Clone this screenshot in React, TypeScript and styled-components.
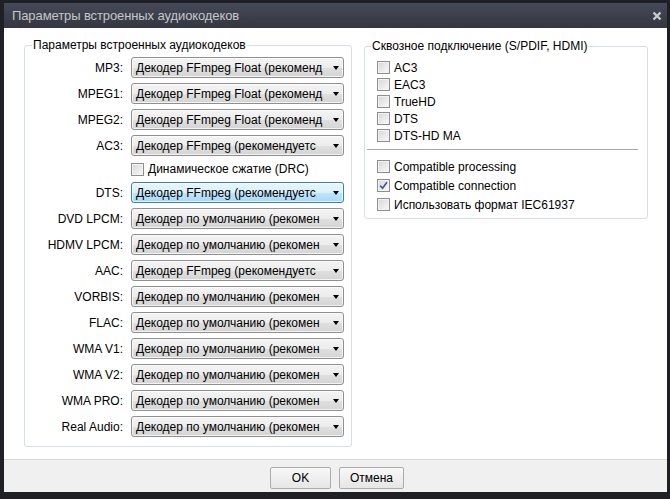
import React from 'react';
import styled, { createGlobalStyle } from 'styled-components';

const GlobalStyle = createGlobalStyle`
  html, body {
    margin: 0;
    padding: 0;
    background: #1d1e23;
  }
  body {
    font-family: "Liberation Sans", Arial, sans-serif;
    font-size: 12px;
    color: #000;
  }
`;

interface Codec {
  label: string;
  value: string;
  focused?: boolean;
  drcAfter?: boolean;
}

// only the part that fits in the combobox is shown
const FF_FLOAT = 'Декодер FFmpeg Float (рекоменд';
const FF = 'Декодер FFmpeg (рекомендуетс';
const DEF = 'Декодер по умолчанию (рекомен';

const codecs: Codec[] = [
  { label: 'MP3:', value: FF_FLOAT },
  { label: 'MPEG1:', value: FF_FLOAT },
  { label: 'MPEG2:', value: FF_FLOAT },
  { label: 'AC3:', value: FF, drcAfter: true },
  { label: 'DTS:', value: FF, focused: true },
  { label: 'DVD LPCM:', value: DEF },
  { label: 'HDMV LPCM:', value: DEF },
  { label: 'AAC:', value: FF },
  { label: 'VORBIS:', value: DEF },
  { label: 'FLAC:', value: DEF },
  { label: 'WMA V1:', value: DEF },
  { label: 'WMA V2:', value: DEF },
  { label: 'WMA PRO:', value: DEF },
  { label: 'Real Audio:', value: DEF },
];

const passthrough = ['AC3', 'EAC3', 'TrueHD', 'DTS', 'DTS-HD MA'];

const extra = [
  { label: 'Compatible processing', checked: false },
  { label: 'Compatible connection', checked: true },
  { label: 'Использовать формат IEC61937', checked: false },
];

const CheckBox = ({ checked }: { checked?: boolean }) => (
  <Box>
    {checked && (
      <svg width="9" height="9" viewBox="0 0 9 9">
        <path d="M1.2 4.6 L3.6 7.2 L7.9 1.3" fill="none" stroke="#3f5491" strokeWidth="1.6" />
      </svg>
    )}
  </Box>
);

const Check = ({ label, checked, h }: { label: string; checked?: boolean; h: number }) => (
  <CheckRow $h={h}>
    <CheckBox checked={checked} />
    <span>{label}</span>
  </CheckRow>
);

const App = () => {
  return (
    <>
      <GlobalStyle />
      <Window>
        <TitleBar>
          <TitleText>Параметры встроенных аудиокодеков</TitleText>
          <svg width="10" height="10" viewBox="0 0 10 10">
            <path d="M1.5 1.5 L8.5 8.5 M8.5 1.5 L1.5 8.5" stroke="#c9cbcf" strokeWidth="2.4" />
          </svg>
        </TitleBar>
        <Body>
          <Group $width={328}>
            <Legend $offset={7}>Параметры встроенных аудиокодеков</Legend>
            <CodecGrid>
              {codecs.map((c) => (
                <React.Fragment key={c.label}>
                  <Label>{c.label}</Label>
                  <Select $focused={c.focused}>
                    <SelectText>{c.value}</SelectText>
                    <Arrow />
                  </Select>
                  {c.drcAfter && (
                    <DrcCell>
                      <Check label="Динамическое сжатие (DRC)" h={16} />
                    </DrcCell>
                  )}
                </React.Fragment>
              ))}
            </CodecGrid>
          </Group>
          <Group $width={284} $top={1}>
            <Legend $offset={6}>Сквозное подключение (S/PDIF, HDMI)</Legend>
            <CheckList $top={6}>
              {passthrough.map((p) => (
                <Check key={p} label={p} h={17} />
              ))}
            </CheckList>
            <Separator />
            <CheckList $top={7} $bottom={4}>
              {extra.map((e) => (
                <Check key={e.label} label={e.label} checked={e.checked} h={19} />
              ))}
            </CheckList>
          </Group>
        </Body>
        <Footer>
          <Button $width={61}>OK</Button>
          <Button $width={65}>Отмена</Button>
        </Footer>
      </Window>
    </>
  );
};

const Window = styled.div`
  width: 670px;
  height: 499px;
  box-sizing: border-box;
  display: flex;
  flex-direction: column;
  background: #1f2026;
  padding: 3px 3px 7px 4px;
`;

const TitleBar = styled.div`
  height: 25px;
  flex-shrink: 0;
  display: flex;
  align-items: center;
  justify-content: space-between;
  padding: 0 5px 0 8px;
  background: linear-gradient(#464958, #343640);
`;

const TitleText = styled.span`
  color: #c4c6cb;
  font-size: 13px;
  letter-spacing: -0.1px;
`;

const Body = styled.div`
  flex: 1;
  background: #fff;
  display: flex;
  align-items: flex-start;
  gap: 12px;
  padding: 10px 0 0 20px;
`;

const Group = styled.fieldset<{ $width: number; $top?: number }>`
  width: ${(p) => p.$width}px;
  box-sizing: border-box;
  min-width: 0;
  margin: ${(p) => p.$top ?? 0}px 0 0 0;
  padding: 0;
  border: 1px solid #d5dfe5;
  border-radius: 3px;
`;

const Legend = styled.legend<{ $offset: number }>`
  margin-left: ${(p) => p.$offset}px;
  padding: 0 1px;
  line-height: 14px;
`;

const CodecGrid = styled.div`
  display: grid;
  grid-template-columns: 98px 213px;
  column-gap: 8px;
  row-gap: 5px;
  align-items: center;
  padding: 5px 7px 9px 0;
`;

const Label = styled.div`
  text-align: right;
  white-space: nowrap;
`;

const DrcCell = styled.div`
  grid-column: 2;
`;

const Select = styled.div<{ $focused?: boolean }>`
  height: 21px;
  box-sizing: border-box;
  display: flex;
  align-items: center;
  padding: 0 3px 0 4px;
  border: 1px solid ${(p) => (p.$focused ? '#3c7fb1' : '#8e8f8f')};
  border-radius: 3px;
  background: ${(p) =>
    p.$focused
      ? 'linear-gradient(#eaf6fd 0%, #d9f0fc 50%, #bee6fd 51%, #a7d9f5 100%)'
      : 'linear-gradient(#f4f4f4 0%, #ececec 50%, #e0e0e0 51%, #d4d4d4 100%)'};
  box-shadow: inset 0 0 0 1px rgba(255, 255, 255, 0.7);
`;

const SelectText = styled.span`
  width: 192px;
  white-space: nowrap;
  flex-shrink: 0;
`;

const Arrow = styled.span`
  width: 0;
  height: 0;
  margin-left: 5px;
  border-left: 3.5px solid transparent;
  border-right: 3.5px solid transparent;
  border-top: 4px solid #000;
`;

const CheckList = styled.div<{ $top: number; $bottom?: number }>`
  display: flex;
  flex-direction: column;
  padding: ${(p) => p.$top}px 0 ${(p) => p.$bottom ?? 0}px 12px;
`;

const CheckRow = styled.div<{ $h: number }>`
  height: ${(p) => p.$h}px;
  display: flex;
  align-items: center;
  gap: 4px;
  white-space: nowrap;
`;

const Box = styled.span`
  width: 13px;
  height: 13px;
  box-sizing: border-box;
  flex-shrink: 0;
  display: inline-flex;
  align-items: center;
  justify-content: center;
  border: 1px solid #8e8f8f;
  background: linear-gradient(135deg, #d6d6d6, #fafafa);
  box-shadow: inset 0 0 0 1px #f2f2f2;
`;

const Separator = styled.div`
  height: 1px;
  margin: 5px 9px 0 2px;
  background: #a9a9a9;
`;

const Footer = styled.div`
  height: 33px;
  flex-shrink: 0;
  box-sizing: border-box;
  display: flex;
  justify-content: center;
  align-items: flex-start;
  gap: 8px;
  padding: 7px 0 0 3px;
  border-top: 1px solid #d9d9d9;
  background: #f0f0f0;
`;

const Button = styled.button<{ $width: number }>`
  width: ${(p) => p.$width}px;
  height: 22px;
  padding: 0;
  box-sizing: border-box;
  font-family: inherit;
  font-size: 12px;
  color: #000;
  border: 1px solid #acacac;
  border-radius: 2px;
  background: linear-gradient(#f8f8f8, #e6e6e6);
`;

export default App;
